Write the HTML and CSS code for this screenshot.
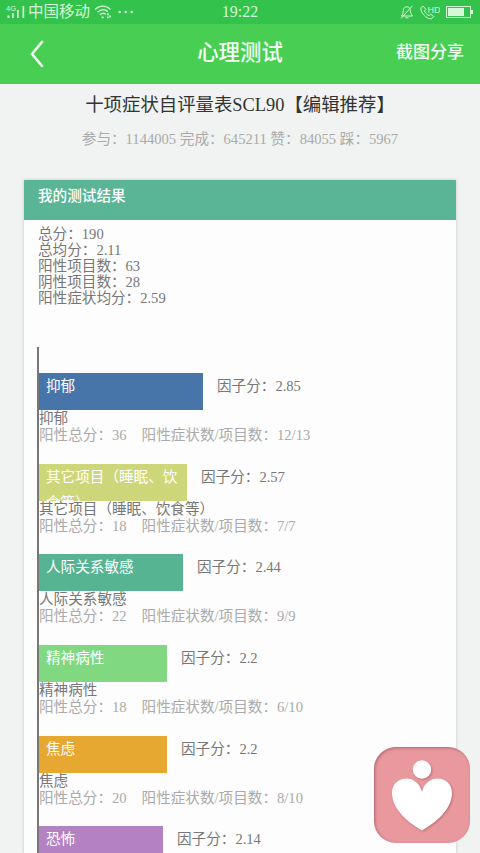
FILE: index.html
```html
<!DOCTYPE html>
<html lang="zh-CN">
<head>
  <meta charset="UTF-8" />
  <meta name="viewport" content="width=device-width, initial-scale=1.0"/>
  <title>心理测试</title>
  <link rel="stylesheet" href="styles.css">
</head>
<body>

<!-- Status bar -->
<div class="status-bar">
  <div class="status-left">
    <svg class="signal" width="20" height="16" viewBox="0 0 20 16">
      <text x="0" y="7" class="signal-text">4G</text>
      <path d="M1.500 11.500h2V14h-2zM6 9h1.700v5H6zM11 6h1.700v8H11zM16.500 2h1.700v12h-1.700z" fill="currentColor"/>
    </svg>
    <span class="carrier">中国移动</span>
    <svg class="wifi" width="18" height="14" viewBox="0 0 18 14" fill="none" stroke="currentColor" stroke-width="1.300">
      <path d="M1 4.500C5.500 0 12 0 16.500 4.500M3.500 7.300C7 4 11 4 14 6.800M6 9.800c2-2 4-2 5.800-.5"/>
      <path d="M7.600 12.300h2M13 9.300h1.800M15.200 11.500H17M13 12.300h1.500" stroke-width="1.800"/>
    </svg>
    <svg class="dots" width="16" height="4" viewBox="0 0 16 4" fill="currentColor">
      <circle cx="1.700" cy="2" r="1.300"/><circle cx="7.700" cy="2" r="1.300"/><circle cx="13.700" cy="2" r="1.300"/>
    </svg>
  </div>
  <span class="clock">19:22</span>
  <div class="status-right">
    <svg width="14" height="14" viewBox="0 0 14 14" fill="none" stroke="currentColor" stroke-width="1">
      <path d="M1.500 11C3 9.500 3 8 3.300 5.500 3.700 2.500 5 1.800 7 1.800s3 1 3.300 3.700C10.600 8 11 9.500 12.500 11zM5.500 12.800h3M1 13.300L12.500.8"/>
    </svg>
    <svg width="20" height="15" viewBox="0 0 20 15" fill="none" stroke="currentColor" stroke-width="1">
      <path d="M2.800 1L.8 3C.8 8 6 14 11.500 13.800l2.200-2.200-3-2.500L9 10.600C7 9.800 5.300 8 4.500 6L6 4.300z"/>
      <text x="7.500" y="7.500" class="hd-text">HD</text>
    </svg>
    <svg width="27" height="12" viewBox="0 0 27 12">
      <rect x=".5" y=".5" width="24" height="11" fill="none" stroke="currentColor"/>
      <path d="M2 2h16v8H2zM25 4h2v4h-2z" fill="currentColor"/>
    </svg>
  </div>
</div>

<!-- Top navigation -->
<header class="navbar">
  <svg class="back" width="14" height="28" viewBox="0 0 14 28" fill="none" stroke="currentColor" stroke-width="2.600" stroke-linecap="round">
    <path d="M12 3L2 15l10 12"/>
  </svg>
  <h1>心理测试</h1>
  <a class="share">截图分享</a>
</header>

<main class="container">
  <h2>十项症状自评量表SCL90【编辑推荐】</h2>
  <p class="stats">参与：1144005 完成：645211 赞：84055 踩：5967</p>

  <section class="card">
    <h3>我的测试结果</h3>
    <div class="summary">
      <p>总分：190</p>
      <p>总均分：2.11</p>
      <p>阳性项目数：63</p>
      <p>阴性项目数：28</p>
      <p>阳性症状均分：2.59</p>
    </div>

    <div class="chart">
      <div class="factor">
        <div class="bar-row">
          <div class="bar blue" style="width: 164px;">抑郁</div>
          <span class="score">因子分：2.85</span>
        </div>
        <p class="name">抑郁</p>
        <p class="detail"><span>阳性总分：36</span><span>阳性症状数/项目数：12/13</span></p>
      </div>

      <div class="factor">
        <div class="bar-row">
          <div class="bar olive" style="width: 148px;">其它项目（睡眠、饮食等）</div>
          <span class="score">因子分：2.57</span>
        </div>
        <p class="name">其它项目（睡眠、饮食等）</p>
        <p class="detail"><span>阳性总分：18</span><span>阳性症状数/项目数：7/7</span></p>
      </div>

      <div class="factor">
        <div class="bar-row">
          <div class="bar teal" style="width: 144px;">人际关系敏感</div>
          <span class="score">因子分：2.44</span>
        </div>
        <p class="name">人际关系敏感</p>
        <p class="detail"><span>阳性总分：22</span><span>阳性症状数/项目数：9/9</span></p>
      </div>

      <div class="factor">
        <div class="bar-row">
          <div class="bar green" style="width: 128px;">精神病性</div>
          <span class="score">因子分：2.2</span>
        </div>
        <p class="name">精神病性</p>
        <p class="detail"><span>阳性总分：18</span><span>阳性症状数/项目数：6/10</span></p>
      </div>

      <div class="factor">
        <div class="bar-row">
          <div class="bar orange" style="width: 128px;">焦虑</div>
          <span class="score">因子分：2.2</span>
        </div>
        <p class="name">焦虑</p>
        <p class="detail"><span>阳性总分：20</span><span>阳性症状数/项目数：8/10</span></p>
      </div>

      <div class="factor">
        <div class="bar-row">
          <div class="bar purple" style="width: 124px;">恐怖</div>
          <span class="score">因子分：2.14</span>
        </div>
      </div>
    </div>
  </section>
</main>

<!-- Floating button -->
<div class="float-btn">
  <svg width="96" height="96" viewBox="0 0 96 96" fill="#fff">
    <circle cx="48" cy="22.500" r="9.300"/>
    <path d="M48 45C46 36 39 31.500 32.500 31.500 23.500 31.500 18 38 18 46c0 14 12 27 30 37.500C66 73 78 60 78 46c0-8-5.500-14.500-14.500-14.500C57 31.500 50 36 48 45z"/>
  </svg>
</div>

</body>
</html>
```
FILE: styles.css
```css
html, body {
  height: 100%;
}

body {
  margin: 0;
  display: flex;
  flex-direction: column;
  overflow: hidden;
  font-family: "Liberation Serif", "Noto Sans CJK SC", serif;
  font-size: 14.6px;
  color: #777;
  background: #f0f3f1;
}

h1, h2, h3, p {
  margin: 0;
  font-weight: normal;
}

svg {
  display: block;
  flex: none;
}

.status-bar {
  flex: none;
  display: grid;
  grid-template-columns: 1fr auto 1fr;
  align-items: center;
  height: 24px;
  padding: 0 7px 0 6px;
  box-sizing: border-box;
  background: #33c24b;
  color: #d5f8d9;
}

.status-left,
.status-right {
  display: flex;
  align-items: center;
}

.status-right {
  justify-content: flex-end;
  gap: 6px;
}

.signal-text {
  font: 7.5px "Liberation Sans", sans-serif;
  fill: currentColor;
}

.hd-text {
  font: 9px "Liberation Sans", sans-serif;
  fill: currentColor;
  stroke: none;
}

.carrier {
  margin-left: 2px;
  font-size: 15.5px;
  line-height: 22px;
}

.wifi {
  margin-left: 4px;
}

.dots {
  margin-left: 6px;
}

.clock {
  padding-left: 1px;
  font-size: 16px;
  line-height: 22px;
}

.navbar {
  flex: none;
  display: grid;
  grid-template-columns: 1fr auto 1fr;
  align-items: center;
  height: 60px;
  padding: 0 16px 2px 30px;
  box-sizing: border-box;
  background: #48cf53;
  color: #f2fff2;
}

.navbar h1 {
  margin-left: -14px;
  font-size: 21.4px;
  line-height: 30px;
  font-weight: 500;
}

.share {
  justify-self: end;
  font-size: 17px;
  line-height: 24px;
  font-weight: 500;
}

.container {
  flex: 1;
  min-height: 0;
  display: flex;
  flex-direction: column;
  padding: 8px 24px 0;
  text-align: center;
}

.container h2 {
  font-size: 18.4px;
  line-height: 26px;
  color: #333;
}

.stats {
  margin-top: 9px;
  line-height: 24px;
  color: #aaa;
}

.card {
  flex: 1;
  min-height: 0;
  margin-top: 29px;
  text-align: left;
  background: #fdfdfd;
  box-shadow: 0 0 3px rgba(0, 0, 0, 0.2);
}

.card h3 {
  height: 40px;
  padding: 0 14px;
  box-sizing: border-box;
  font-size: 14.6px;
  line-height: 33px;
  font-weight: 500;
  color: #fff;
  background: #5ab596;
}

.summary {
  padding: 6px 14px 0;
  line-height: 16px;
}

.chart {
  margin: 41px 0 0 13px;
  padding-top: 26px;
  border-left: 2px solid #777;
}

.factor {
  height: 90.7px;
}

.bar-row {
  display: flex;
  gap: 14px;
  height: 37px;
}

.bar {
  height: 37px;
  padding: 0 7px;
  box-sizing: border-box;
  overflow: hidden;
  line-height: 26px;
  color: #fff;
}

.score {
  line-height: 26px;
}

.name {
  line-height: 17px;
}

.detail {
  display: flex;
  gap: 15px;
  line-height: 17px;
  color: #aaa;
}

.blue {
  background: #4775aa;
}

.olive {
  background: #ced67a;
}

.teal {
  background: #56b492;
}

.green {
  background: #80d980;
}

.orange {
  background: #e6a830;
}

.purple {
  background: #b481c3;
}

.float-btn {
  position: fixed;
  right: 10px;
  bottom: 10px;
  width: 96px;
  height: 96px;
  border-radius: 22px;
  background: #e9989e;
  box-shadow: inset 1px 1px 3px rgba(120, 50, 60, 0.5);
}

.float-btn svg {
  filter: drop-shadow(1px 1px 1px rgba(120, 50, 60, 0.4));
}
```
